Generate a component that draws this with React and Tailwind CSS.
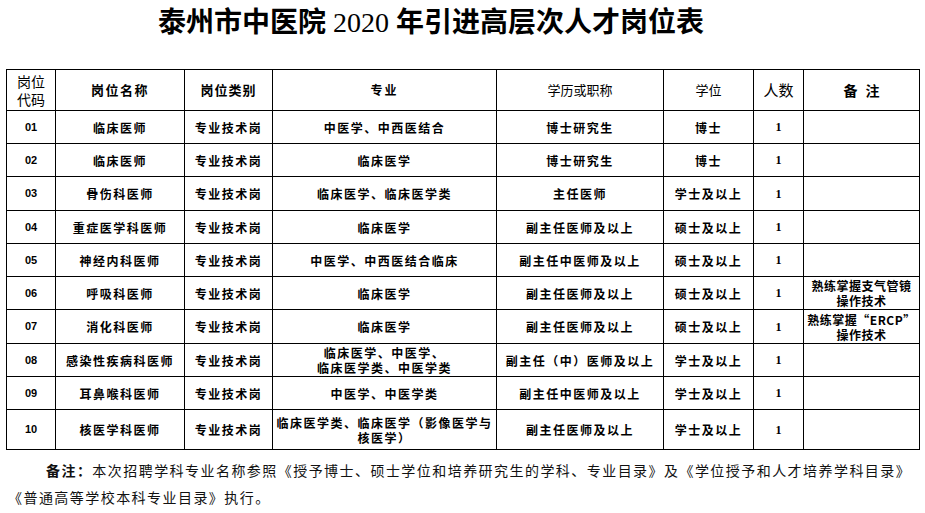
import React from 'react';

const rows = [
  { code: '01', name: '临床医师', major: ['中医学、中西医结合'], edu: '博士研究生', degree: '博士', note: null },
  { code: '02', name: '临床医师', major: ['临床医学'], edu: '博士研究生', degree: '博士', note: null },
  { code: '03', name: '骨伤科医师', major: ['临床医学、临床医学类'], edu: '主任医师', degree: '学士及以上', note: null },
  { code: '04', name: '重症医学科医师', major: ['临床医学'], edu: '副主任医师及以上', degree: '硕士及以上', note: null },
  { code: '05', name: '神经内科医师', major: ['中医学、中西医结合临床'], edu: '副主任中医师及以上', degree: '硕士及以上', note: null },
  { code: '06', name: '呼吸科医师', major: ['临床医学'], edu: '副主任医师及以上', degree: '硕士及以上', note: ['熟练掌握支气管镜', '操作技术'] },
  { code: '07', name: '消化科医师', major: ['临床医学'], edu: '副主任医师及以上', degree: '硕士及以上', note: ['熟练掌握“ERCP”', '操作技术'] },
  { code: '08', name: '感染性疾病科医师', major: ['临床医学、中医学、', '临床医学类、中医学类'], edu: '副主任（中）医师及以上', degree: '学士及以上', note: null },
  { code: '09', name: '耳鼻喉科医师', major: ['中医学、中医学类'], edu: '副主任中医师及以上', degree: '学士及以上', note: null },
  { code: '10', name: '核医学科医师', major: ['临床医学类、临床医学（影像医学与', '核医学）'], edu: '副主任医师及以上', degree: '学士及以上', note: null },
];

const cell = 'flex flex-col items-center justify-center border-r border-b border-black text-center';
const body = 'text-[12px] font-bold tracking-[1.5px] leading-[15px] whitespace-nowrap';

function Lines({ items }) {
  return items.map((t, i) => <span key={i}>{t}</span>);
}

export default function App() {
  return (
    <div className="w-[925px] h-[513px] overflow-hidden bg-white text-black font-['Noto_Sans_CJK_SC',sans-serif]">
      <div className="h-[69px] pl-[158px] pt-[5px] text-[28px] leading-[36px] font-bold font-['Liberation_Serif','Noto_Sans_CJK_SC',serif] whitespace-nowrap">
        泰州市中医院 <span className="font-normal">2020</span> 年引进高层次人才岗位表
      </div>

      <div className="ml-[6px] w-[914px] grid grid-cols-[49px_129px_88px_224px_167px_90px_50px_116px] grid-rows-[41px_33px_33px_34px_33px_33px_33px_34px_33px_33px_40px] border-l border-t border-black">
        <div className={`${cell} text-[14px] leading-[18px]`}>
          <span>岗位</span>
          <span>代码</span>
        </div>
        <div className={`${cell} text-[13px] font-bold tracking-[1.5px]`}>岗位名称</div>
        <div className={`${cell} text-[13px] font-bold tracking-[1px]`}>岗位类别</div>
        <div className={`${cell} text-[12px] font-bold tracking-[2px]`}>专业</div>
        <div className={`${cell} text-[13px]`}>学历或职称</div>
        <div className={`${cell} text-[13px]`}>学位</div>
        <div className={`${cell} text-[15px]`}>人数</div>
        <div className={`${cell} text-[14px] font-bold tracking-[8px] pl-[8px]`}>备注</div>

        {rows.map((r) => (
          <React.Fragment key={r.code}>
            <div className={`${cell} text-[11px] font-bold font-['Liberation_Sans',sans-serif]`}>{r.code}</div>
            <div className={`${cell} ${body}`}>{r.name}</div>
            <div className={`${cell} ${body}`}>专业技术岗</div>
            <div className={`${cell} ${body}`}>
              <Lines items={r.major} />
            </div>
            <div className={`${cell} ${body}`}>{r.edu}</div>
            <div className={`${cell} ${body}`}>{r.degree}</div>
            <div className={`${cell} text-[12px] font-bold font-['Liberation_Serif',serif]`}>1</div>
            <div className={`${cell} text-[12px] font-bold tracking-[0.5px] leading-[15px] whitespace-nowrap`}>
              {r.note && <Lines items={r.note} />}
            </div>
          </React.Fragment>
        ))}
      </div>

      <div className="mt-[7px] text-[14px] leading-[27px] tracking-[1.45px] text-[#111] whitespace-nowrap">
        <div className="pl-[46px]">
          <span className="font-bold">备注：</span>本次招聘学科专业名称参照《授予博士、硕士学位和培养研究生的学科、专业目录》及《学位授予和人才培养学科目录》
        </div>
        <div className="pl-[8px]">《普通高等学校本科专业目录》执行。</div>
      </div>
    </div>
  );
}
